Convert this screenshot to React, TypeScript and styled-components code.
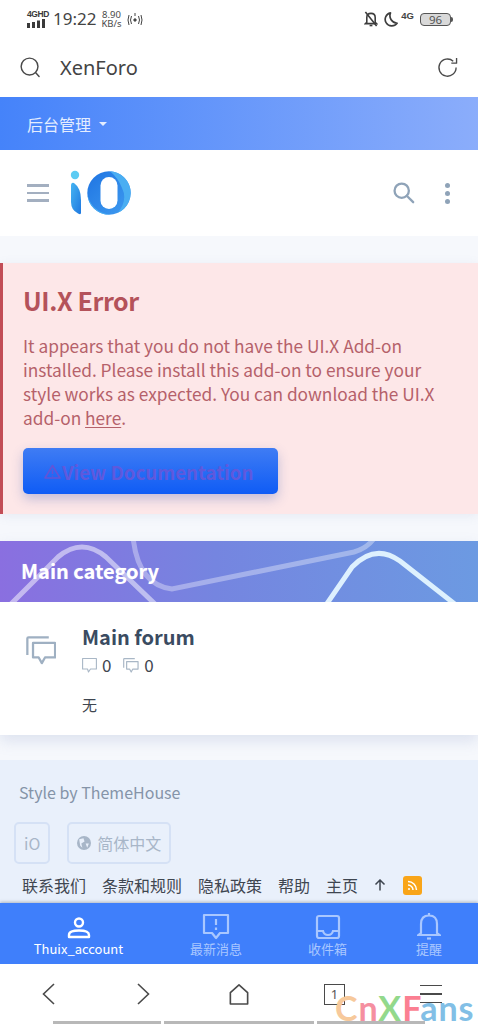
import React, { FC } from "react";
import styled, { createGlobalStyle } from "styled-components";

const GlobalStyle = createGlobalStyle`
  html, body {
    margin: 0;
    padding: 0;
    background: #f6f8fc;
  }
  * {
    box-sizing: border-box;
  }
  body {
    font-family: "Noto Sans CJK SC", "Noto Sans", sans-serif;
  }
`;

const footerLinks = ["联系我们", "条款和规则", "隐私政策", "帮助", "主页"];

const CategoryLines = () => (
  <svg width="478" height="61" viewBox="0 0 478 61" fill="none">
    <path
      d="M10 64 L58 16 Q82 -4 106 16 L156 64"
      stroke="#fff"
      strokeOpacity="0.5"
      strokeWidth="5"
    />
    <path
      d="M133 -4 Q138 44 172 48 L354 11 Q368 7 375 -4"
      stroke="#fff"
      strokeOpacity="0.35"
      strokeWidth="5"
    />
    <path
      d="M326 64 L352 26 Q375 2 400 20 L456 64"
      stroke="#e4f6ff"
      strokeOpacity="0.95"
      strokeWidth="5"
    />
  </svg>
);

const Logo = () => (
  <svg width="62" height="46" viewBox="0 0 62 46">
    <defs>
      <linearGradient id="stem" x1="0" y1="0" x2="1" y2="1">
        <stop offset="0" stopColor="#45b4f2" />
        <stop offset="1" stopColor="#1f78e0" />
      </linearGradient>
      <linearGradient id="ring" x1="0" y1="0" x2="1" y2="1">
        <stop offset="0" stopColor="#1f74e2" />
        <stop offset="1" stopColor="#3f9cf0" />
      </linearGradient>
    </defs>
    <circle cx="5" cy="5" r="4.2" fill="#5ccbf3" />
    <path d="M1 16 Q1 12 4 13 Q11 18 11 30 L11 43 Q11 45 8 43.5 Q1 40 1 32 Z" fill="url(#stem)" />
    <circle cx="39" cy="23" r="21.7" fill="url(#ring)" />
    <path d="M40 1.3 A21.7 21.7 0 0 1 48 42.7 Q58 30 52 18 Q48 8 40 1.3 Z" fill="#4aaef2" />
    <path d="M17.5 25 Q22 42 40 44.7 A21.7 21.7 0 0 1 17.5 25 Z" fill="#4aaef2" />
    <rect x="30.5" y="7" width="17" height="32" rx="8.5" fill="#fff" />
  </svg>
);

const ChatIcon: FC<{ size: number; stroke: string }> = ({ size, stroke }) => (
  <svg width={size * 1.05} height={size} viewBox="0 0 24 23" fill="none" stroke={stroke} strokeWidth="1.8">
    <path d="M1 15 V2 Q1 1 2 1 H18" />
    <path d="M5.5 5.5 H23 V17 H15 L12.5 21.5 L10 17 H5.5 Z" strokeLinejoin="round" />
  </svg>
);

const BubbleIcon = () => (
  <svg width="15" height="16" viewBox="0 0 15 16" fill="none" stroke="#a9b7c6" strokeWidth="1.1">
    <path d="M0.6 1.5 H14.4 V12 H8.5 L6.5 15 L5.5 12 H0.6 Z" strokeLinejoin="round" />
  </svg>
);

export default function App() {
  return (
    <Screen>
      <GlobalStyle />
      <StatusBar>
        <StatusGroup>
          <SignalBlock>
            <NetLabel>4GHD</NetLabel>
            <svg width="20" height="9" viewBox="0 0 20 9" fill="#3a3a3a">
              <rect x="0" y="4" width="3" height="5" />
              <rect x="5" y="3" width="3" height="6" />
              <rect x="10" y="1.5" width="3" height="7.5" />
              <rect x="15" y="0" width="3" height="9" />
            </svg>
          </SignalBlock>
          <Clock>19:22</Clock>
          <Speed>
            <span>8.90</span>
            <span>KB/s</span>
          </Speed>
          <svg width="16" height="14" viewBox="0 0 16 14" fill="none" stroke="#444" strokeWidth="1">
            <circle cx="8" cy="8" r="1.2" fill="#444" />
            <path d="M8 1 V4" />
            <path d="M4.5 4 Q2.5 8 4.5 12" />
            <path d="M11.5 4 Q13.5 8 11.5 12" />
            <path d="M2 3 Q0 8 2 13" />
            <path d="M14 3 Q16 8 14 13" />
          </svg>
        </StatusGroup>
        <StatusIcons>
          <svg width="14" height="16" viewBox="0 0 15 17" fill="none" stroke="#3d3d3d" strokeWidth="1.7">
            <path d="M3 12 V7 Q3 2.5 7.5 2.5 Q12 2.5 12 7 V12 L13.5 13.5 H1.5 Z" />
            <path d="M6 15.5 H9" />
            <path d="M1.5 1 L13.5 16" />
          </svg>
          <svg width="15" height="17" viewBox="0 0 16 17" fill="none" stroke="#3d3d3d" strokeWidth="1.8">
            <path d="M8 1.5 A7 7 0 1 0 15 12.5 A8 8 0 0 1 8 1.5 Z" strokeLinejoin="round" />
          </svg>
          <SimBlock>4G</SimBlock>
          <Battery>96</Battery>
        </StatusIcons>
      </StatusBar>

      <AddressBar>
        <AddressLeft>
          <svg width="21" height="21" viewBox="0 0 22 22" fill="none" stroke="#4a4a4a" strokeWidth="1.5">
            <circle cx="10" cy="10" r="8.8" />
            <path d="M16.5 16.5 L20 20.5" strokeLinecap="round" />
          </svg>
          <AddressText>XenForo</AddressText>
        </AddressLeft>
        <svg width="21" height="21" viewBox="0 0 22 22" fill="none" stroke="#4a4a4a" strokeWidth="1.4">
          <path d="M20 11 A9 9 0 1 1 17 4.4" />
          <path d="M20.5 1 L20.5 6.5 L15 6.5" strokeLinejoin="round" />
        </svg>
      </AddressBar>

      <AdminBar>
        <AdminLabel>后台管理</AdminLabel>
        <Caret />
      </AdminBar>

      <SiteHeader>
        <HeaderLeft>
          <Burger>
            <i />
            <i />
            <i />
          </Burger>
          <Logo />
        </HeaderLeft>
        <HeaderRight>
          <svg width="22" height="22" viewBox="0 0 24 24" fill="none" stroke="#8fa3b8" strokeWidth="2.5">
            <circle cx="9.5" cy="9.5" r="7.8" />
            <path d="M15 15 L22 22" strokeLinecap="round" />
          </svg>
          <Dots>
            <i />
            <i />
            <i />
          </Dots>
        </HeaderRight>
      </SiteHeader>

      <ErrorBlock>
        <ErrorTitle>UI.X Error</ErrorTitle>
        <ErrorText>
          It appears that you do not have the UI.X Add-on installed. Please install this add-on to ensure your style
          works as expected. You can download the UI.X add-on <u>here</u>.
        </ErrorText>
        <DocsButton>
          <svg width="17" height="15" viewBox="0 0 17 15" fill="none" stroke="#6354d6" strokeWidth="1.6">
            <path d="M8.5 1.5 L16 14 H1 Z" strokeLinejoin="round" />
            <path d="M8.5 6 V10 M8.5 11.5 V12.5" />
          </svg>
          View Documentation
        </DocsButton>
      </ErrorBlock>

      <CategoryBlock>
        <CategoryHeader>
          <LinesLayer>
            <CategoryLines />
          </LinesLayer>
          <CategoryTitle>Main category</CategoryTitle>
        </CategoryHeader>
        <NodeRow>
          <NodeIcon>
            <ChatIcon size={29} stroke="#9fb0c2" />
          </NodeIcon>
          <NodeBody>
            <NodeTitle>Main forum</NodeTitle>
            <NodeStats>
              <Stat>
                <BubbleIcon />0
              </Stat>
              <Stat>
                <ChatIcon size={15} stroke="#a9b7c6" />0
              </Stat>
            </NodeStats>
            <NodeLatest>无</NodeLatest>
          </NodeBody>
        </NodeRow>
      </CategoryBlock>

      <Footer>
        <Credit>Style by ThemeHouse</Credit>
        <FooterButtons>
          <FooterButton>iO</FooterButton>
          <FooterButton>
            <svg width="14" height="14" viewBox="0 0 13 13">
              <circle cx="6.5" cy="6.5" r="6.5" fill="#a8b6c8" />
              <path d="M2 3 L6 2 L7 5 L4 7 L5 11 L3 9 Z M8 7 L11 7 L9.5 11 Z" fill="#e9f0fb" />
            </svg>
            简体中文
          </FooterButton>
        </FooterButtons>
        <FooterLinks>
          {footerLinks.map((link) => (
            <FooterLink key={link}>{link}</FooterLink>
          ))}
          <svg width="12" height="12" viewBox="0 0 12 12" fill="none" stroke="#3f4650" strokeWidth="1.5">
            <path d="M6 11.5 V1 M1.5 5.5 L6 1 L10.5 5.5" />
          </svg>
          <RssBadge>
            <svg width="11" height="11" viewBox="0 0 11 11" fill="none" stroke="#fff" strokeWidth="1.5">
              <path d="M1 1.5 A8.5 8.5 0 0 1 9.5 10" />
              <path d="M1 5 A5 5 0 0 1 6 10" />
              <circle cx="2" cy="9" r="1" fill="#fff" stroke="none" />
            </svg>
          </RssBadge>
        </FooterLinks>
      </Footer>

      <TabBar>
        <Tab $active $width={157}>
          <svg width="24" height="24" viewBox="0 0 24 24" fill="none" stroke="#fff" strokeWidth="2.4">
            <circle cx="12" cy="6.5" r="4" />
            <path d="M2 21 V19 Q2 14.5 12 14.5 Q22 14.5 22 19 V21 Z" strokeLinejoin="round" />
          </svg>
          <TabLabel>Thuix_account</TabLabel>
        </Tab>
        <Tab $width={118}>
          <svg width="28" height="27" viewBox="0 0 28 27" fill="none" stroke="#a9c7ff" strokeWidth="2.2">
            <path d="M2 2 H26 V20 H18 L14 25 L10 20 H2 Z" strokeLinejoin="round" />
            <path d="M14 6 V12 M14 14.5 V17" />
          </svg>
          <TabLabel>最新消息</TabLabel>
        </Tab>
        <Tab $width={105}>
          <svg width="26" height="26" viewBox="0 0 26 26" fill="none" stroke="#a9c7ff" strokeWidth="2.2">
            <rect x="2" y="2" width="22" height="22" rx="2" />
            <path d="M2 17 H8 Q9 21 13 21 Q17 21 18 17 H24" />
          </svg>
          <TabLabel>收件箱</TabLabel>
        </Tab>
        <Tab $width={98}>
          <svg width="24" height="28" viewBox="0 0 24 28" fill="none" stroke="#a9c7ff" strokeWidth="2.2">
            <path d="M12 1 V3 M4 21 V12 Q4 3.5 12 3.5 Q20 3.5 20 12 V21 L22.5 23 H1.5 Z" />
            <path d="M10 26.5 H14" />
          </svg>
          <TabLabel>提醒</TabLabel>
        </Tab>
      </TabBar>

      <BrowserBar>
        <svg width="13" height="22" viewBox="0 0 13 22" fill="none" stroke="#4a4a4a" strokeWidth="1.6">
          <path d="M12 1 L1.5 11 L12 21" />
        </svg>
        <svg width="13" height="22" viewBox="0 0 13 22" fill="none" stroke="#4a4a4a" strokeWidth="1.6">
          <path d="M1 1 L11.5 11 L1 21" />
        </svg>
        <svg width="20" height="23" viewBox="0 0 22 24" fill="none" stroke="#4a4a4a" strokeWidth="1.8">
          <path d="M1.5 10 L11 1.5 L20.5 10 V22.5 H1.5 Z" strokeLinejoin="round" />
        </svg>
        <TabCount>1</TabCount>
        <MenuLines>
          <i />
          <i />
          <i />
        </MenuLines>
        <Watermark>
          <WatermarkLetter $color="#f7c99b">C</WatermarkLetter>
          <WatermarkLetter $color="#f58fa0">n</WatermarkLetter>
          <WatermarkLetter $color="#93d98c">X</WatermarkLetter>
          <WatermarkLetter $color="#fb7f92">F</WatermarkLetter>
          <WatermarkLetter $color="#82bfe6">ans</WatermarkLetter>
        </Watermark>
        <GestureHints>
          <GestureSegment $width={108} />
          <GestureSegment $width={150} />
          <GestureSegment $width={108} />
        </GestureHints>
      </BrowserBar>
    </Screen>
  );
}

const Screen = styled.div`
  width: 478px;
  height: 1024px;
  overflow: hidden;
  display: flex;
  flex-direction: column;
  background: #f6f8fc;
`;

const StatusBar = styled.div`
  height: 44px;
  padding: 0 27px 6px 27px;
  display: flex;
  justify-content: space-between;
  align-items: center;
  background: #fff;
  flex-shrink: 0;
`;

const StatusGroup = styled.div`
  display: flex;
  align-items: center;
  gap: 5px;
`;

const StatusIcons = styled.div`
  display: flex;
  align-items: center;
  gap: 5px;
`;

const SignalBlock = styled.div`
  display: flex;
  flex-direction: column;
  gap: 1px;
  width: 21px;
`;

const NetLabel = styled.span`
  font: 700 8.5px/8px "Liberation Sans", sans-serif;
  letter-spacing: -0.4px;
  color: #3a3a3a;
  white-space: nowrap;
`;

const Clock = styled.span`
  font: 400 17px/20px "Noto Sans", sans-serif;
  color: #444;
`;

const Speed = styled.div`
  display: flex;
  flex-direction: column;
  align-items: center;
  font: 400 9.5px/9px "Noto Sans", sans-serif;
  color: #4a4a4a;
`;

const SimBlock = styled.span`
  margin: 0 1px 6px -2px;
  font: 700 9.5px/10px "Liberation Sans", sans-serif;
  color: #444;
`;

const Battery = styled.div`
  position: relative;
  width: 31px;
  height: 13px;
  border: 1px solid #555;
  border-radius: 4px;
  background: #d9d9d9;
  font: 400 11.5px/11px "Noto Sans", sans-serif;
  color: #555;
  text-align: center;
  &::after {
    content: "";
    position: absolute;
    right: -3px;
    top: 3px;
    width: 2px;
    height: 5px;
    border-radius: 0 2px 2px 0;
    background: #555;
  }
`;

const AddressBar = styled.div`
  height: 53px;
  padding: 0 20px 6px 20px;
  display: flex;
  justify-content: space-between;
  align-items: center;
  background: #fff;
  flex-shrink: 0;
`;

const AddressLeft = styled.div`
  display: flex;
  align-items: center;
  gap: 19px;
`;

const AddressText = styled.span`
  font: 400 20px/28px "Noto Sans", sans-serif;
  color: #444;
`;

const AdminBar = styled.div`
  height: 53px;
  padding: 0 27px;
  display: flex;
  align-items: center;
  gap: 8px;
  background: linear-gradient(90deg, #4583fa, #8badfb);
  flex-shrink: 0;
`;

const AdminLabel = styled.span`
  font-size: 16px;
  color: #e4edff;
`;

const Caret = styled.span`
  width: 0;
  height: 0;
  border-left: 4px solid transparent;
  border-right: 4px solid transparent;
  border-top: 4px solid #e4edff;
`;

const SiteHeader = styled.div`
  height: 86px;
  padding: 0 28px 0 27px;
  display: flex;
  justify-content: space-between;
  align-items: center;
  background: #fff;
  flex-shrink: 0;
`;

const HeaderLeft = styled.div`
  display: flex;
  align-items: center;
  gap: 21px;
`;

const Burger = styled.div`
  display: flex;
  flex-direction: column;
  gap: 5px;
  i {
    display: block;
    width: 22px;
    height: 2.4px;
    background: #a3afc0;
  }
`;

const HeaderRight = styled.div`
  display: flex;
  align-items: center;
  gap: 30px;
`;

const Dots = styled.div`
  display: flex;
  flex-direction: column;
  gap: 3px;
  i {
    display: block;
    width: 5px;
    height: 5px;
    border-radius: 50%;
    background: #8fa3b8;
  }
`;

const ErrorBlock = styled.div`
  margin-top: 27px;
  height: 251px;
  padding: 20px 20px 0 20px;
  border-left: 3px solid #c24d56;
  background: #fde7e8;
  box-shadow: 0 2px 10px rgba(120, 140, 180, 0.12);
  flex-shrink: 0;
`;

const ErrorTitle = styled.h2`
  margin: 0;
  font-size: 25px;
  line-height: 34px;
  font-weight: 700;
  letter-spacing: -0.4px;
  color: #b4525a;
`;

const ErrorText = styled.p`
  margin: 17px 0 0;
  font-size: 17.3px;
  line-height: 24px;
  color: #b5616a;
  u {
    text-underline-offset: 2px;
  }
`;

const DocsButton = styled.button`
  margin-top: 18px;
  width: 255px;
  height: 46px;
  padding: 0 0 0 21px;
  display: flex;
  align-items: center;
  gap: 1px;
  border: 0;
  border-radius: 5px;
  background: linear-gradient(180deg, #3f7cf4, #0f5cf5);
  box-shadow: 0 5px 12px rgba(60, 90, 180, 0.3);
  font-family: inherit;
  font-size: 18.7px;
  font-weight: 700;
  color: #5f59dc;
`;

const CategoryBlock = styled.div`
  margin-top: 27px;
  background: #fff;
  box-shadow: 0 6px 14px rgba(120, 140, 190, 0.2);
  flex-shrink: 0;
`;

const CategoryHeader = styled.div`
  position: relative;
  height: 61px;
  overflow: hidden;
  padding: 14px 21px;
  background: linear-gradient(90deg, #8a6fe0, #7585e0 45%, #6c9ae2);
`;

const LinesLayer = styled.div`
  position: absolute;
  left: 0;
  top: 0;
  line-height: 0;
`;

const CategoryTitle = styled.h3`
  position: relative;
  margin: 0;
  font-size: 20px;
  line-height: 32px;
  font-weight: 700;
  color: #fff;
  text-shadow: 0 0 1px rgba(255, 255, 255, 0.4);
`;

const NodeRow = styled.div`
  height: 133px;
  padding: 20px 0 0 26px;
  display: flex;
`;

const NodeIcon = styled.div`
  width: 56px;
  padding-top: 14px;
  flex-shrink: 0;
`;

const NodeBody = styled.div`
  display: flex;
  flex-direction: column;
`;

const NodeTitle = styled.div`
  font-size: 20px;
  line-height: 30px;
  font-weight: 700;
  color: #3a4b61;
`;

const NodeStats = styled.div`
  display: flex;
  gap: 12px;
  margin-top: 2px;
`;

const Stat = styled.div`
  display: flex;
  align-items: center;
  gap: 5px;
  font-size: 17px;
  line-height: 22px;
  color: #3f4650;
`;

const NodeLatest = styled.div`
  margin-top: 18px;
  font-size: 15px;
  line-height: 22px;
  color: #3f4650;
`;

const Footer = styled.div`
  margin-top: 25px;
  height: 143px;
  padding: 20px 14px 0;
  background: #e9f0fb;
  flex-shrink: 0;
`;

const Credit = styled.div`
  padding-left: 5px;
  font-size: 16px;
  line-height: 24px;
  color: #8594a8;
`;

const FooterButtons = styled.div`
  display: flex;
  gap: 17px;
  margin-top: 18px;
`;

const FooterButton = styled.div`
  height: 42px;
  padding: 0 8px;
  display: flex;
  align-items: center;
  gap: 6px;
  border: 2.5px solid #d5e1f5;
  border-radius: 5px;
  font-size: 16px;
  color: #a8b6c8;
`;

const FooterLinks = styled.div`
  display: flex;
  align-items: center;
  gap: 16px;
  margin-top: 9px;
  padding-left: 8px;
`;

const FooterLink = styled.span`
  font-size: 16px;
  line-height: 24px;
  color: #3f4650;
`;

const RssBadge = styled.span`
  width: 19px;
  height: 19px;
  margin-left: 1px;
  display: flex;
  align-items: center;
  justify-content: center;
  border-radius: 3px;
  background: #f9a519;
`;

const TabBar = styled.div`
  height: 61px;
  display: flex;
  background: #3f7ffb;
  box-shadow: 0 -1px 3px rgba(60, 70, 90, 0.35);
  position: relative;
  flex-shrink: 0;
`;

const Tab = styled.div<{ $active?: boolean; $width: number }>`
  width: ${(p) => p.$width}px;
  display: flex;
  flex-direction: column;
  align-items: center;
  justify-content: flex-end;
  padding-bottom: 7px;
  color: ${(p) => (p.$active ? "#fff" : "#a9c7ff")};
`;

const TabLabel = styled.span`
  font-size: 13px;
  line-height: 17px;
  white-space: nowrap;
`;

const BrowserBar = styled.div`
  position: relative;
  height: 60px;
  padding: 0 0 0 42px;
  display: grid;
  grid-template-columns: 95px 92px 95px 96px 21px;
  align-items: center;
  background: #fff;
  flex-shrink: 0;
`;

const TabCount = styled.span`
  width: 21px;
  height: 21px;
  border: 1.5px solid #4a4a4a;
  font: 400 13px/18px "Noto Sans", sans-serif;
  color: #555;
  text-align: center;
`;

const MenuLines = styled.div`
  display: flex;
  flex-direction: column;
  gap: 7px;
  i {
    display: block;
    width: 22px;
    height: 1.6px;
    background: #4a4a4a;
  }
`;

const Watermark = styled.div`
  position: absolute;
  left: 335px;
  top: 29px;
  font: 700 34px/30px "Lato", sans-serif;
  letter-spacing: 1px;
  white-space: nowrap;
`;

const WatermarkLetter = styled.span<{ $color: string }>`
  color: ${(p) => p.$color};
`;

const GestureHints = styled.div`
  position: absolute;
  left: 53px;
  bottom: 0;
  display: flex;
  gap: 3px;
`;

const GestureSegment = styled.span<{ $width: number }>`
  width: ${(p) => p.$width}px;
  height: 3px;
  background: #b8b8b8;
`;
